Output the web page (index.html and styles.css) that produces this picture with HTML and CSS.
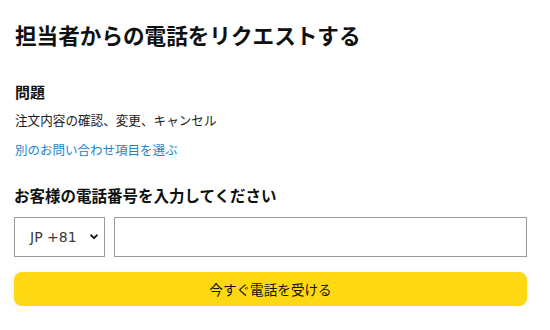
FILE: index.html
```html
<!DOCTYPE html>
<html lang="ja">
<head>
<meta charset="utf-8">
<title>担当者からの電話をリクエストする</title>
<link rel="stylesheet" href="styles.css">
</head>
<body>
<main class="page">
  <h1 class="title">担当者からの電話をリクエストする</h1>
  <h2 class="section-label">問題</h2>
  <p class="issue">注文内容の確認、変更、キャンセル</p>
  <a class="link" href="#">別のお問い合わせ項目を選ぶ</a>
  <h2 class="phone-label">お客様の電話番号を入力してください</h2>
  <div class="phone-row">
    <div class="country">
      <span class="country-text">JP +81</span>
      <svg class="chevron" width="8" height="6" viewBox="0 0 8 6"><path d="M1.2 1.3 L4 4.2 L6.8 1.3" fill="none" stroke="#111" stroke-width="1.9" stroke-linecap="round" stroke-linejoin="round"/></svg>
    </div>
    <input class="phone-input" type="tel" aria-label="電話番号">
  </div>
  <button class="call-btn" type="button">今すぐ電話を受ける</button>
</main>
</body>
</html>
```

FILE: styles.css
```css
* { box-sizing: border-box; }
html, body { margin: 0; padding: 0; background: #fff; }
body {
  font-family: "Noto Sans CJK JP", "Noto Sans", "Liberation Sans", sans-serif;
  color: #0f1111;
}
.page {
  width: 513px;
  margin-left: 14px;
  display: flex;
  flex-direction: column;
  align-items: stretch;
}
.title {
  margin: 20px 0 0 1px;
  font-size: 21.6px;
  line-height: 30px;
  font-weight: 700;
}
.section-label {
  margin: 32px 0 0 1px;
  font-size: 15px;
  line-height: 20px;
  font-weight: 700;
}
.issue {
  margin: 8px 0 0 1px;
  font-size: 12.6px;
  line-height: 20px;
  color: #1a1a1a;
}
.link {
  margin: 10px 0 0 1px;
  font-size: 12.5px;
  line-height: 20px;
  color: #1b84cc;
  text-decoration: none;
  align-self: flex-start;
}
.phone-label {
  margin: 24px 0 0 0;
  font-size: 15.5px;
  line-height: 22px;
  font-weight: 700;
}
.phone-row {
  margin-top: 11px;
  display: flex;
  gap: 9px;
  height: 40px;
}
.country {
  width: 91px;
  border: 1px solid #9a9a9a;
  display: flex;
  align-items: center;
  padding: 0 6px 0 15px;
  justify-content: space-between;
  background: #fff;
}
.country-text {
  font-family: "DejaVu Sans", "Liberation Sans", sans-serif;
  font-size: 14px;
  color: #3a3a3a;
}
.chevron { display: block; }
.phone-input {
  flex: 1;
  border: 1px solid #9a9a9a;
  margin: 0;
  padding: 0 8px;
  font-size: 14px;
  background: #fff;
  outline: none;
}
.call-btn {
  margin-top: 15px;
  height: 34px;
  border: none;
  border-radius: 8px;
  background: #ffd814;
  box-shadow: 0 2px 5px rgba(213, 217, 217, 0.5);
  font-family: "Noto Sans CJK JP", "Noto Sans", sans-serif;
  font-size: 13.6px;
  color: #0f1111;
  cursor: pointer;
  padding: 0;
}
```
